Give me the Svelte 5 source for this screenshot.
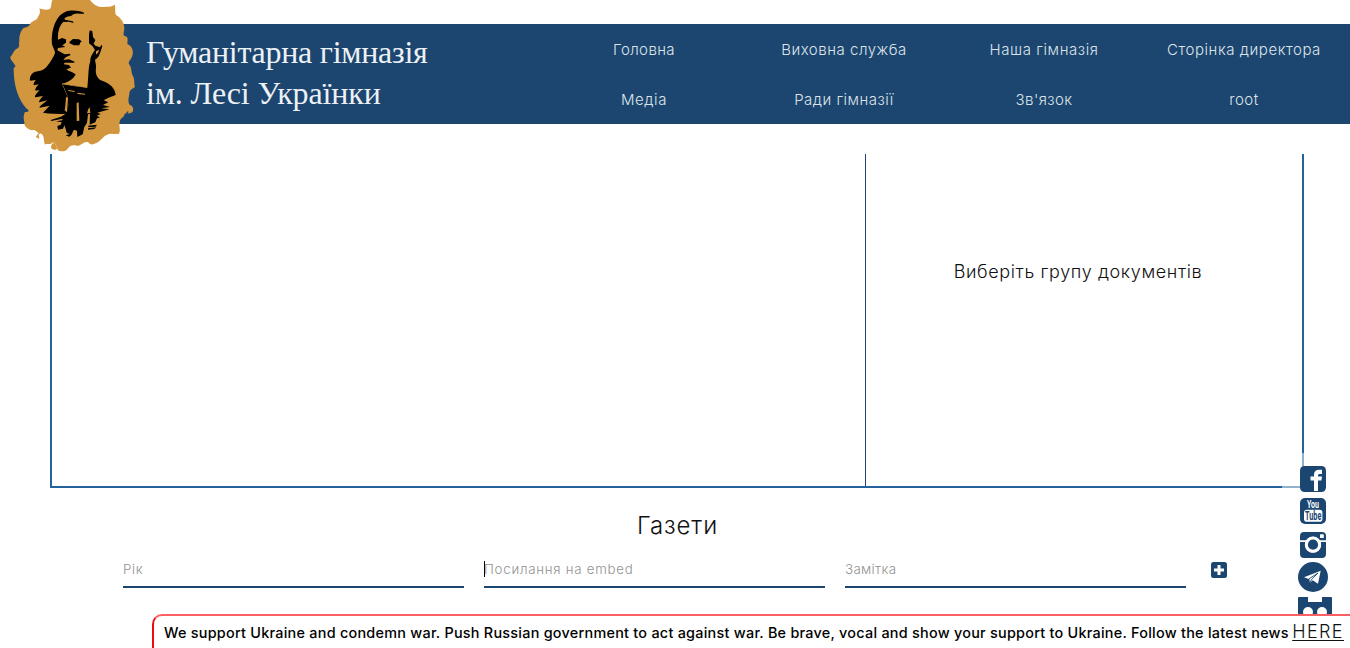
<script>
  const nav = [
    { label: 'Головна', spacing: 0.4 },
    { label: 'Виховна служба', spacing: 0.52 },
    { label: 'Наша гімназія', spacing: 0.58 },
    { label: 'Сторінка директора', spacing: 0.55 },
    { label: 'Медіа', spacing: 0.55 },
    { label: 'Ради гімназії', spacing: 0.5 },
    { label: "Зв'язок", spacing: 0.4 },
    { label: 'root', spacing: 0.5 }
  ];
  const fields = [
    { label: 'Рік', spacing: 0.6 },
    { label: 'Посилання на embed', spacing: 0.74 },
    { label: 'Замітка', spacing: 0.35 }
  ];
</script>

<div class="page">
  <header>
    <svg class="emblem" viewBox="0 0 435 480" aria-hidden="true">
      <path fill="#d2963e" d="M157 0H270C280 12 292 22 307 21C323 19 332 22 344 14C348 25 343 36 349 46C362 54 373 67 373 86C372 97 367 107 377 109C385 111 383 122 382 132C398 139 402 156 396 170C391 181 382 186 389 195C397 208 392 217 399 228C405 240 401 250 405 261C398 266 388 269 388 282C386 294 383 305 389 314C398 317 402 325 398 335C390 342 379 338 374 346C370 352 362 354 359 365C356 379 363 390 357 401C346 405 332 398 322 404C307 410 303 423 289 429C279 433 272 437 265 427C252 421 243 439 230 437C217 435 212 435 203 446C197 455 187 455 179 453C172 452 172 441 166 432C161 429 160 425 158 428C151 434 142 430 134 433C131 422 133 410 126 403L120 400L116 405L118 416L107 411L116 399C108 393 103 387 97 391C83 388 72 380 73 366C70 356 70 345 75 336C87 337 89 330 80 326C67 313 53 288 47 261C42 239 41 217 41 203C51 200 44 195 40 188C34 181 31 177 31 171C40 163 41 149 53 145C61 139 55 132 58 123C57 110 60 97 68 86C79 80 87 83 92 69C100 60 111 62 114 50C120 43 122 36 118 25C127 29 140 31 150 27C155 20 153 9 157 0Z"/>
      <path fill="#d2963e" d="M162 428C154 431 151 440 155 446C160 451 168 450 171 446C171 440 168 434 162 428Z"/>
      <path d="M252 38C238 32 214 29 197 35C180 41 169 58 163 75C154 99 155 123 156 132C158 143 166 151 165 160C159 174 151 187 141 199C133 210 121 214 105 215C94 220 88 231 90 242L107 240C102 247 99 253 102 256L116 253C109 261 104 268 107 272L119 270C109 280 102 290 106 292L129 288C122 297 115 304 118 307L142 301C130 311 116 320 119 323L149 317L129 338C149 342 174 341 196 342L206 329L202 288L186 252C206 247 222 236 227 223C218 216 204 213 199 208L213 203L207 195L191 193L194 188L222 188L224 185L207 178L190 180L197 172L212 165L209 161L194 163L172 151L174 144L196 141L187 136L198 128V118L186 114L174 119C173 98 177 78 190 66L207 65L221 69L218 64L195 59C190 54 199 50 213 48L220 43C229 38 239 42 252 41Z"/>
      <path d="M208 126L219 117L237 118L245 124L240 129L238 136H222L209 130Z"/>
      <path d="M270 91C265 101 268 119 267 130L278 139L285 150C278 160 270 171 271 184C265 199 266 220 264 239L262 263L187 251L194 267L202 286L205 318L196 342L183 350L152 360L154 363L187 356V361L168 364L185 367L182 374L172 378L174 389L189 386L193 376L197 387L200 398L209 402L197 406L208 410C217 405 217 396 222 389L231 392L232 411L248 403L253 381L261 369L264 343L270 342L269 374L286 367L291 355L300 353L291 347L302 342L292 338L328 328L304 325L330 321L309 315L325 307L311 301L324 294L347 285C345 263 328 249 306 242C292 237 285 222 288 203C289 194 286 187 285 179C298 174 302 153 307 138L304 134L300 142L286 137L281 131L286 120L279 111L277 94Z"/>
      <path d="M264 377L291 374L287 380L266 382ZM264 385L289 382L283 387L264 389Z"/>
      <path fill="#d2963e" d="M187 250Q225 259 262 262L261 263Q225 260 187 253ZM205 270L224 273V276L205 273ZM232 278L255 281V284L233 282ZM198 290L204 294L201 337L194 331L196 318ZM230 309L236 307L238 362L230 363ZM265 327L269 322L271 339L261 340ZM288 154L298 149L294 158L288 164Z"/>
      <path fill="none" stroke="#1c466f" stroke-width="3" d="M373 345L384 335L382 342Z"/>
    </svg>
    <h1><span class="line first">Гуманітарна гімназія</span><span class="line second">ім. Лесі Українки</span></h1>
    <nav>
      {#each nav as item}
        <a href="#menu" style="letter-spacing: {item.spacing}px">{item.label}</a>
      {/each}
    </nav>
  </header>

  <main>
    <section class="documents">
      <div class="viewer"></div>
      <div class="groups"><p>Виберіть групу документів</p></div>
    </section>

    <section class="papers">
      <h2>Газети</h2>
      <div class="form">
        {#each fields as field, i}
          <div class="field" class:focused={i === 1}><span style="letter-spacing: {field.spacing}px">{field.label}</span></div>
        {/each}
        <svg class="plus" viewBox="0 0 16 16" role="img" aria-label="+">
          <rect width="16" height="16" rx="2.5" fill="#1b466f"/>
          <path d="M8 3v10M3 8h10" stroke="#fff" stroke-width="3"/>
        </svg>
      </div>
    </section>
  </main>

  <aside class="social">
    <svg width="26" height="26" viewBox="0 0 26 26">
      <rect width="26" height="26" rx="4.5" fill="#1b4672"/>
      <path fill="#fff" d="M14 25V14.5H10.5V10.5H14V8.5C14 5.3 16 3.7 19 3.7H22V8H20C18.5 8 18 8.7 18 9.7V10.5H22L21.4 14.5H18V25Z"/>
    </svg>
    <svg width="26" height="26" viewBox="0 0 26 26" overflow="visible">
      <rect width="26" height="26" rx="5" fill="#1b4672"/>
      <rect x="4" y="11.7" width="18.4" height="12" rx="2.8" fill="#fff"/>
      <text x="7" y="10.4" textLength="12" lengthAdjust="spacingAndGlyphs" fill="#fff" font-size="11.5">You</text>
      <text x="5" y="22" textLength="16.3" lengthAdjust="spacingAndGlyphs" fill="#1b4672" font-size="12">Tube</text>
    </svg>
    <svg width="26" height="26" viewBox="0 0 26 26">
      <path fill="#1b4672" d="M4 0H22Q26 0 26 4V8.3H19.8A8.4 8.4 0 0 0 6.2 8.3H0V4Q0 0 4 0ZM0 10H5.3A8.1 8.1 0 1 0 20.7 10H26V22Q26 26 22 26H4Q0 26 0 22Z"/>
      <circle cx="13" cy="12.7" r="6.8" fill="#1b4672"/>
      <circle cx="13" cy="12.7" r="6.6" fill="none" stroke="#fff" stroke-width="3"/>
      <rect x="20" y="2.3" width="3.8" height="3.8" rx=".6" fill="#fff"/>
    </svg>
    <svg width="30" height="30" viewBox="0 0 30 30">
      <circle cx="15" cy="15" r="15" fill="#1b4672"/>
      <path fill="#fff" d="M6 15.2L22.7 8.7L20 21.8L14.6 18.3L12 21L11.4 17.2Z"/>
      <path fill="none" stroke="#1b4672" stroke-width=".9" d="M10.7 17L20 11L13.3 17.8L12 21"/>
    </svg>
    <svg width="34" height="28" viewBox="0 0 34 28">
      <path fill="#1b4672" d="M1 0H10V5H24V0H33Q34 0 34 1V28H0V1Q0 0 1 0Z"/>
      <circle cx="10" cy="15" r="5" fill="#fff"/><circle cx="24" cy="15" r="5" fill="#fff"/>
    </svg>
  </aside>

  <div class="banner"><span class="message">We support Ukraine and condemn war. Push Russian government to act against war. Be brave, vocal and show your support to Ukraine. Follow the latest news</span><a href="#news">HERE</a></div>
</div>

<style>
  :global(body) { margin: 0; overflow: hidden; background: #fff; }
  .page {
    position: relative;
    box-sizing: border-box;
    height: 648px;
    padding-top: 24px;
    overflow: hidden;
    background: #fff;
    color: #111;
    font-family: Inter, "Open Sans", sans-serif;
    font-weight: 300;
  }
  header {
    position: relative;
    display: flex;
    justify-content: space-between;
    height: 100px;
    padding: 0 6px 0 146px;
    background: #1c466f;
    color: #fff;
  }
  .emblem { position: absolute; top: -24px; left: 0; width: 145px; height: 160px; z-index: 1; }
  h1 {
    margin: 0;
    padding-top: 8px;
    color: #edf1f5;
    font: 400 32px/41px "Liberation Serif", serif;
    white-space: nowrap;
  }
  .line { display: block; }
  .first { letter-spacing: -.27px; }
  .second { letter-spacing: -.14px; }
  nav {
    display: grid;
    grid-template: repeat(2, 50px) / repeat(4, 200px);
    justify-items: center;
  }
  nav a {
    color: #dce4eb;
    font-size: 15px;
    line-height: 51px;
    text-decoration: none;
    white-space: nowrap;
  }
  .documents {
    box-sizing: border-box;
    display: grid;
    grid-template-columns: 813px 1fr;
    width: 1254px;
    height: 334px;
    margin: 30px 0 0 50px;
    border: solid #24629b;
    border-width: 0 2px 2px;
  }
  .groups { padding: 104px 12px 0 0; border-left: 1px solid #1c466f; text-align: center; }
  .groups p { margin: 0; font-size: 18px; line-height: 28px; letter-spacing: .62px; }
  h2 { margin: 20px 0 0; padding-left: 5px; text-align: center; font-size: 24px; line-height: 35px; font-weight: 300; letter-spacing: .9px; }
  .form { display: flex; gap: 20px; padding: 8px 0 0 123px; }
  .field {
    box-sizing: border-box;
    width: 341px;
    height: 37px;
    padding-top: 10px;
    border-bottom: 2px solid #1c466f;
    color: #929292;
    font-size: 13.3px;
    line-height: 16px;
  }
  .focused { background: linear-gradient(#000, #000) 0 10px / 1px 16px no-repeat; }
  .plus { width: 16px; height: 16px; margin: 11px 0 0 5px; }
  .social {
    position: absolute;
    top: 453px;
    left: 1282px;
    box-sizing: border-box;
    display: flex;
    flex-direction: column;
    gap: 7px;
    width: 68px;
    height: 195px;
    padding: 12px 0 0 18px;
    background: rgba(255, 255, 255, .5);
  }
  .social svg { flex: none; }
  .social svg:nth-child(1) { margin: 1px 0 -1px; }
  .social svg:nth-child(3) { margin: 1px 0 -1px; }
  .social svg:nth-child(4) { margin: -2px 0 -2px -2px; }
  .social svg:nth-child(5) { margin-left: -2px; }
  .social text { font-family: Roboto, sans-serif; font-weight: 700; }
  .banner {
    position: absolute;
    top: 614px;
    left: 152px;
    box-sizing: border-box;
    display: flex;
    align-items: baseline;
    justify-content: space-between;
    width: 1198px;
    height: 40px;
    padding: 3px 6px 0 10px;
    border-top: 2px solid #fb6064;
    border-left: 2px solid #ef0b10;
    border-radius: 10px 0 0;
    background: #fff;
    color: #000;
    white-space: nowrap;
  }
  .message { font-size: 14.4px; line-height: 26px; font-weight: 500; letter-spacing: .26px; }
  .banner a { color: #111; font-size: 18px; line-height: 26px; letter-spacing: 1.4px; text-underline-offset: 2px; }
</style>
